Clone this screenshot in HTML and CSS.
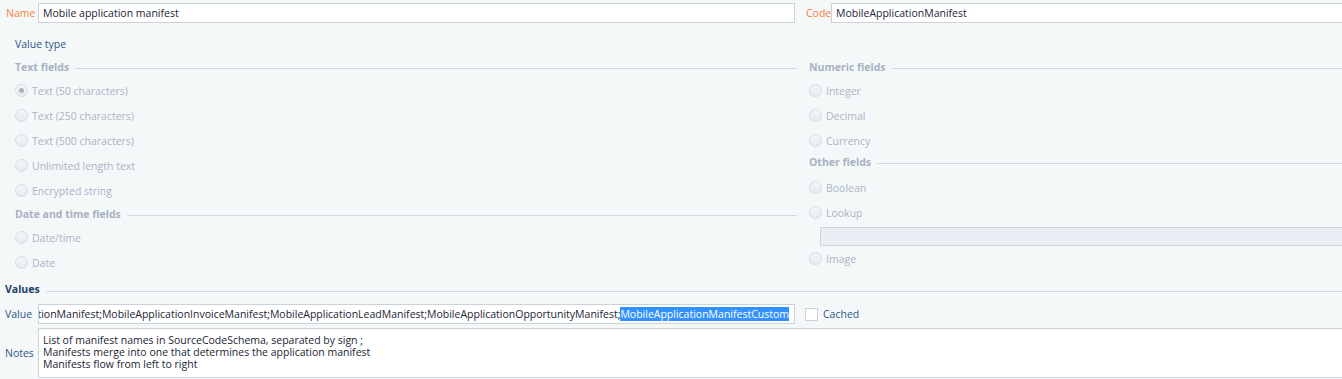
FILE: index.html
```html
<!DOCTYPE html>
<html lang="en">
<head>
    <meta charset="UTF-8">
    <title>Mobile application manifest</title>
    <link rel="stylesheet" href="styles.css">
</head>
<body>

    <!-- NAME / CODE -->
    <div class="top-row">
        <div class="field field-name">
            <label class="lbl lbl-req">Name</label>
            <div class="input">Mobile application manifest</div>
        </div>
        <div class="field field-code">
            <label class="lbl lbl-req">Code</label>
            <div class="input">MobileApplicationManifest</div>
        </div>
    </div>

    <div class="value-type">Value type</div>

    <!-- VALUE TYPES -->
    <div class="types">
        <div class="col col-left">
            <div class="group-head"><span>Text fields</span></div>
            <div class="radio checked"><i></i>Text (50 characters)</div>
            <div class="radio"><i></i>Text (250 characters)</div>
            <div class="radio"><i></i>Text (500 characters)</div>
            <div class="radio"><i></i>Unlimited length text</div>
            <div class="radio"><i></i>Encrypted string</div>
            <div class="group-head"><span>Date and time fields</span></div>
            <div class="radio"><i></i>Date/time</div>
            <div class="radio"><i></i>Date</div>
        </div>
        <div class="col col-right">
            <div class="group-head"><span>Numeric fields</span></div>
            <div class="radio"><i></i>Integer</div>
            <div class="radio"><i></i>Decimal</div>
            <div class="radio"><i></i>Currency</div>
            <div class="group-head group-head-short"><span>Other fields</span></div>
            <div class="radio"><i></i>Boolean</div>
            <div class="radio"><i></i>Lookup</div>
            <div class="lookup-box"></div>
            <div class="radio"><i></i>Image</div>
        </div>
    </div>

    <!-- VALUES -->
    <div class="values-head"><span>Values</span></div>

    <div class="value-row">
        <label class="lbl">Value</label>
        <div class="input input-scroll">
            <span>tionManifest;MobileApplicationInvoiceManifest;MobileApplicationLeadManifest;MobileApplicationOpportunityManifest;<mark>MobileApplicationManifestCustom</mark></span>
        </div>
        <div class="check"><i></i>Cached</div>
    </div>

    <div class="notes-row">
        <label class="lbl">Notes</label>
        <div class="notes">List of manifest names in SourceCodeSchema, separated by sign ;<br>Manifests merge into one that determines the application manifest<br>Manifests flow from left to right</div>
    </div>

</body>
</html>
```

FILE: styles.css
```css
* {
    margin: 0;
    padding: 0;
    box-sizing: border-box;
}

body {
    background: #f5f8f9;
    font-family: 'Open Sans', sans-serif;
    font-size: 10.5px;
    color: #1b2533;
    width: 1342px;
    overflow: hidden;
}

.top-row {
    display: flex;
    padding-top: 2px;
    height: 24px;
}

.field {
    display: flex;
    align-items: center;
}

.field-name { width: 806px; }
.field-code { flex: 1; }

.lbl {
    color: #2f5587;
    padding-left: 6px;
    width: 38px;
    flex-shrink: 0;
}

.lbl-req { color: #f7823a; }
.field-code .lbl { padding-left: 0; width: 25px; }

.input {
    height: 20px;
    line-height: 18px;
    background: #fff;
    border: 1px solid #cbd2da;
    padding: 0 4px;
    white-space: nowrap;
    overflow: hidden;
}

.field-name .input { width: 757px; }
.field-code .input { flex: 1; margin-right: -10px; }

.value-type {
    color: #2f5587;
    padding: 12px 0 4px 15px;
    line-height: 16px;
}

.types {
    display: flex;
}

.col-left {
    width: 797px;
    padding-left: 15px;
}

.col-right {
    flex: 1;
    padding-left: 12px;
}

.group-head {
    height: 22px;
    display: flex;
    align-items: center;
    gap: 6px;
    font-weight: 700;
    color: #a7b2c1;
}

.group-head-short {
    margin-top: -2px;
    margin-bottom: 2px;
}

.group-head::after {
    content: '';
    flex: 1;
    height: 1px;
    background: #d3d9e0;
    margin-top: 3px;
}

.radio {
    height: 25px;
    display: flex;
    align-items: center;
    color: #a9b5c6;
}

.radio i {
    width: 13px;
    height: 13px;
    border-radius: 50%;
    border: 1px solid #d4dbe4;
    background: linear-gradient(#f3f5f8, #e7ebf0);
    margin-right: 4px;
    display: flex;
    align-items: center;
    justify-content: center;
}

.radio.checked i::after {
    content: '';
    width: 5px;
    height: 5px;
    border-radius: 50%;
    background: #a9b1bd;
}

.lookup-box {
    height: 19px;
    margin: 2px 0 0 11px;
    background: #ebeef5;
    border: 1px solid #cdd4df;
    border-right: none;
}

.values-head {
    display: flex;
    align-items: center;
    gap: 6px;
    height: 18px;
    margin-top: 5px;
    padding-left: 5px;
    font-weight: 700;
    color: #213f6a;
}

.values-head::after {
    content: '';
    flex: 1;
    height: 1px;
    background: #d3d9e0;
    margin-top: 4px;
}

.value-row {
    display: flex;
    align-items: center;
    margin-top: 6px;
    height: 20px;
}

.value-row .lbl { padding-left: 5px; }

.input-scroll {
    width: 757px;
    display: flex;
    justify-content: flex-end;
    padding-right: 5px;
}

.input-scroll span { flex-shrink: 0; }

mark {
    background: #3390ff;
    color: #fff;
}

.check {
    display: flex;
    align-items: center;
    margin-left: 10px;
    color: #2f5587;
}

.check i {
    width: 13px;
    height: 13px;
    border: 1px solid #cbd2da;
    background: #fff;
    margin-right: 5px;
}

.notes-row {
    display: flex;
    align-items: center;
    margin-top: 4px;
}

.notes-row .lbl { padding-left: 5px; }

.notes {
    flex: 1;
    height: 50px;
    background: #fff;
    border: 1px solid #cbd2da;
    border-right: none;
    padding: 5px 4px;
    line-height: 12px;
}
```
